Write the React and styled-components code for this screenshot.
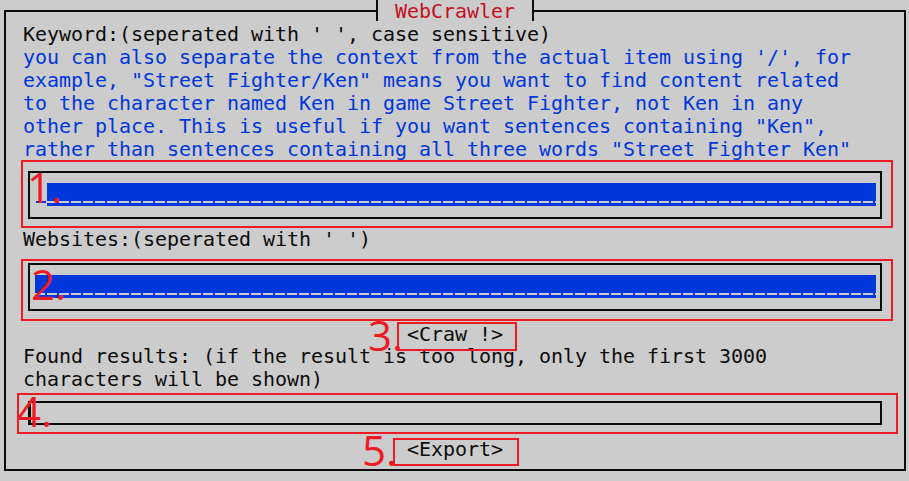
import styled, { createGlobalStyle } from 'styled-components'

const mono = `"DejaVu Sans Mono", "Liberation Mono", monospace`

const GlobalStyle = createGlobalStyle`
  body {
    margin: 0;
    background: #cccccc;
    color: #0c0c0c;
    font-family: ${mono};
    font-size: 20px;
    line-height: 23px;
    letter-spacing: -0.04px;
  }
`

const Frame = styled.div`
  position: relative;
  box-sizing: border-box;
  margin: 10px 0 0 4px;
  width: 902px;
  height: 461px;
  padding-top: 11px;
  border: 2px solid #0c0c0c;
  display: flex;
  flex-direction: column;
  align-items: flex-start;
`

const TitleTab = styled.div`
  position: absolute;
  left: 370px;
  top: -12px;
  height: 21px;
  box-sizing: border-box;
  padding: 0 17px 0 17px;
  border-left: 2px solid #0c0c0c;
  border-right: 2px solid #0c0c0c;
  background: #cccccc;
  color: #c50f1f;
  white-space: pre;
`

const TextBlock = styled.div`
  margin-left: 17px;
  white-space: pre;
`

const Line = styled.div`
  color: ${p => (p.$blue ? '#0037da' : '#0c0c0c')};
`

const Annotation = styled.div`
  position: relative;
  box-sizing: border-box;
  margin: ${p => p.$mt}px 0 ${p => p.$mb || 0}px ${p => p.$ml}px;
  width: ${p => p.$w}px;
  height: ${p => (p.$h ? `${p.$h}px` : 'auto')};
  padding: ${p => p.$pad};
  border: 2px solid #ed1c24;
`

const Marker = styled.span`
  position: absolute;
  z-index: 1;
  left: ${p => p.$x}px;
  top: ${p => p.$y}px;
  font-family: "Open Sans", "Noto Sans", sans-serif;
  font-size: 42px;
  line-height: 1;
  letter-spacing: 0;
  color: #ed1c24;
  white-space: pre;
`

const InputBox = styled.div`
  display: flex;
  border: 2px solid #0c0c0c;
  padding: ${p => p.$pad};
`

const Field = styled.div`
  flex: 1;
  height: 23px;
  background:
    repeating-linear-gradient(to right, #cccccc 0 10px, transparent 10px 12px) 0 18px / 100% 2px no-repeat,
    #0037da;
`

const Cursor = styled.div`
  width: 11px;
  height: 23px;
  background: linear-gradient(#0037da, #0037da) 0 18px / 10px 2px no-repeat;
`

const OutputBox = styled.div`
  box-sizing: border-box;
  height: 24px;
  border: 2px solid #0c0c0c;
  border-left-width: 3px;
`

const ButtonLabel = styled.div`
  white-space: pre;
  line-height: ${p => p.$lh}px;
`

const help = [
  "you can also separate the context from the actual item using '/', for",
  'example, "Street Fighter/Ken" means you want to find content related',
  'to the character named Ken in game Street Fighter, not Ken in any',
  'other place. This is useful if you want sentences containing "Ken",',
  'rather than sentences containing all three words "Street Fighter Ken"',
]

export default function App() {
  return (
    <>
      <GlobalStyle />
      <Frame>
        <TitleTab>WebCrawler</TitleTab>

        <TextBlock>
          <Line>Keyword:(seperated with ' ', case sensitive)</Line>
          {help.map(t => (
            <Line key={t} $blue>{t}</Line>
          ))}
        </TextBlock>

        <Annotation $mt={-1} $ml={15} $w={872} $pad='9px 9px 7px 5px'>
          <Marker $x={4} $y={4}>1.</Marker>
          <InputBox $pad='10px 4px 11px 6px'>
            <Cursor />
            <Field />
          </InputBox>
        </Annotation>

        <TextBlock>Websites:(seperated with ' ')</TextBlock>

        <Annotation $mt={8} $ml={15} $w={872} $pad='2px 9px 8px 5px'>
          <Marker $x={8} $y={2}>2.</Marker>
          <InputBox $pad='10px 4px 11px 5px'>
            <Field />
          </InputBox>
        </Annotation>

        <Annotation $mt={1} $mb={-6} $ml={391} $w={120} $h={29} $pad='0 0 0 8px'>
          <Marker $x={-31} $y={-10}>3.</Marker>
          <ButtonLabel $lh={21}>{'<Craw !>'}</ButtonLabel>
        </Annotation>

        <TextBlock>
          <Line>Found results: (if the result is too long, only the first 3000</Line>
          <Line>characters will be shown)</Line>
        </TextBlock>

        <Annotation $mt={2} $ml={11} $w={881} $pad='6px 14px 7px 9px'>
          <Marker $x={-2} $y={-5}>4.</Marker>
          <OutputBox />
        </Annotation>

        <Annotation $mt={4} $ml={387} $w={126} $h={28} $pad='0 0 0 12px'>
          <Marker $x={-33} $y={-11}>5.</Marker>
          <ButtonLabel $lh={19}>{'<Export>'}</ButtonLabel>
        </Annotation>
      </Frame>
    </>
  )
}
